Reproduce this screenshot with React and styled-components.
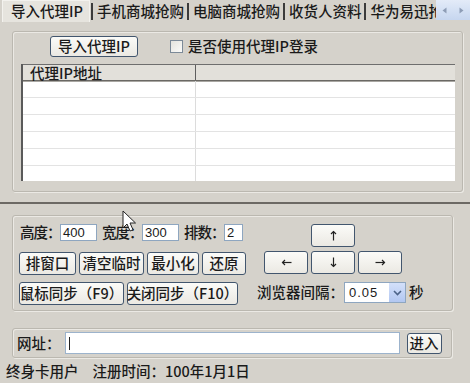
import React from "react";
import styled, { createGlobalStyle, css } from "styled-components";

const GlobalStyle = createGlobalStyle`
  html, body {
    margin: 0;
    padding: 0;
    background: #d5d2cb;
  }
  body {
    font-family: "Noto Sans CJK SC", "DejaVu Sans", sans-serif;
  }
`;

const Window = styled.div`
  position: relative;
  width: 470px;
  height: 383px;
  overflow: hidden;
  background: #d5d2cb;
  color: #1a1a1a;
  font-size: 14.5px;
  font-weight: 500;
  line-height: 1;
`;

/* ---------- tabs ---------- */

const TabBar = styled.div`
  display: flex;
  height: 22px;
`;

const TabList = styled.div`
  flex: 1;
  display: flex;
  align-items: center;
  overflow: hidden;
  padding-left: 2px;
`;

const Tab = styled.div`
  flex-shrink: 0;
  display: flex;
  align-items: center;
  height: 100%;
  white-space: nowrap;
  ${(p) =>
    p.$active &&
    css`
      padding: 0 6px 0 8px;
      background: #e6e4de;
      border: 1px solid #f3f2ee;
      border-bottom: none;
      box-sizing: border-box;
    `}
`;

const TabSep = styled.span`
  flex-shrink: 0;
  width: 2px;
  height: 17px;
  margin: 0 ${(p) => p.$right || 4}px 0 ${(p) => p.$left || 3}px;
  background: #3b3b3b;
`;

const TabScroll = styled.div`
  width: 34px;
  height: 20px;
  display: flex;
  align-items: center;
  justify-content: space-around;
  background: linear-gradient(#e3ebf8, #c6d6ef);
`;

const TabPanel = styled.div`
  box-sizing: border-box;
  height: 182px;
  padding: 9px 7px 0 12px;
  border-bottom: 2px solid #6c6964;
`;

/* ---------- common ---------- */

const GroupBox = styled.div`
  border: 1px solid #bbb8b0;
  border-radius: 3px;
  box-shadow: inset 1px 1px 0 #ebe9e4, 1px 1px 0 #ebe9e4;
`;

const Button = styled.div`
  box-sizing: border-box;
  display: flex;
  align-items: center;
  justify-content: center;
  flex-shrink: 0;
  width: ${(p) => p.$w}px;
  height: ${(p) => p.$h || 23}px;
  background: linear-gradient(#fbfbf8, #ebe9e3);
  border: 1px solid #42566e;
  border-radius: 3px;
  white-space: nowrap;
`;

const TextField = styled.div`
  box-sizing: border-box;
  display: flex;
  align-items: center;
  flex-shrink: 0;
  width: ${(p) => p.$w}px;
  height: ${(p) => p.$h || 17}px;
  padding-left: 2px;
  background: #fff;
  border: 1px solid #8ea6c0;
  font-family: "Liberation Sans", sans-serif;
  font-weight: 400;
  font-size: 13px;
`;

const Label = styled.span`
  white-space: nowrap;
`;

/* ---------- proxy group ---------- */

const ProxyGroup = styled(GroupBox)`
  padding-top: 4px;
`;

const Toolbar = styled.div`
  display: flex;
  align-items: center;
  padding-left: 37px;
`;

const CheckBox = styled.div`
  box-sizing: border-box;
  width: 13px;
  height: 13px;
  margin: 0 5px 0 32px;
  background: linear-gradient(135deg, #e4e3dd, #fbfbf9);
  border: 1px solid #7c8a98;
`;

const ListView = styled.div`
  height: 117px;
  margin: 7px 7px 10px 8px;
  background: #fff;
  border-left: 2px solid #5a5a5a;
  overflow: hidden;
`;

const ListHeader = styled.div`
  display: grid;
  grid-template-columns: 172px 1fr;
  height: 15px;
  background: #e2e0da;
  border-top: 1px solid #6e6e6e;
  border-bottom: 1px solid #6a6864;
  box-shadow: 0 1px 0 #a9a7a2;
`;

const HeaderCell = styled.div`
  padding-left: 7px;
  line-height: 15px;
  white-space: nowrap;
  & + & {
    border-left: 1px solid #5e5e5e;
  }
`;

const ListRow = styled.div`
  display: grid;
  grid-template-columns: 172px 1fr;
  height: 16px;
  border-bottom: 1px solid #e3e3e3;
`;

const Cell = styled.div`
  & + & {
    border-left: 1px solid #dcdcdc;
  }
`;

/* ---------- window controls ---------- */

const ControlGroup = styled(GroupBox)`
  display: flex;
  margin: 11px 17px 0 12px;
  padding: 8px 6px 5px;
`;

const Column = styled.div`
  display: flex;
  flex-direction: column;
`;

const Row = styled.div`
  display: flex;
  align-items: center;
  gap: ${(p) => p.$gap || 0}px;
  margin-top: ${(p) => p.$mt || 0}px;
`;

const SizeLabel = styled(Label)`
  width: 40px;
  margin-left: ${(p) => p.$ml || 0}px;
  letter-spacing: -1px;
`;

const RightColumn = styled.div`
  display: flex;
  flex-direction: column;
  margin-left: 11px;
`;

const ArrowPad = styled.div`
  display: grid;
  grid-template-columns: repeat(3, 44px);
  column-gap: 3px;
  row-gap: 4px;
  margin-left: 7px;
`;

const ArrowCell = styled(Button)`
  grid-column: ${(p) => p.$col};
`;

const Select = styled.div`
  box-sizing: border-box;
  display: flex;
  width: 62px;
  height: 21px;
  margin-right: 3px;
  background: #fff;
  border: 1px solid #8ea6c0;
`;

const SelectValue = styled.div`
  flex: 1;
  display: flex;
  align-items: center;
  padding-left: 4px;
  font-family: "Liberation Sans", sans-serif;
  font-weight: 400;
  font-size: 13px;
  letter-spacing: 1px;
`;

const SelectButton = styled.div`
  width: 16px;
  display: flex;
  align-items: center;
  justify-content: center;
  background: linear-gradient(#d3e0fa, #b2c7f1);
`;

/* ---------- url bar ---------- */

const UrlGroup = styled(GroupBox)`
  display: flex;
  align-items: center;
  height: 28px;
  margin: 17px 18px 0 12px;
  padding-left: 4px;
`;

const UrlField = styled(TextField)`
  margin: 0 7px 0 4px;
  border-color: #9cb3cc;
`;

const Caret = styled.span`
  width: 1px;
  height: 13px;
  margin-left: 1px;
  background: #222;
`;

const StatusBar = styled.div`
  display: flex;
  gap: 14px;
  margin-top: 6px;
  padding-left: 6px;
`;

const Pointer = styled.svg`
  position: absolute;
  left: 122px;
  top: 210px;
`;

const Arrow = ({ dir }) => {
  const rot = { up: 0, right: 90, down: 180, left: 270 }[dir];
  return (
    <svg width="11" height="11" viewBox="0 0 11 11">
      <g transform={`rotate(${rot} 5.5 5.5)`} fill="none" stroke="#222" strokeWidth="1.2">
        <path d="M5.5 1.5v9" />
        <path d="M3 4l2.5-2.5L8 4" />
      </g>
    </svg>
  );
};

const ScrollArrow = ({ flip }) => (
  <svg width="5" height="7" viewBox="0 0 5 7">
    <path d={flip ? "M0.5 0.5L4.5 3.5L0.5 6.5z" : "M4.5 0.5L0.5 3.5L4.5 6.5z"} fill="#8e9db6" />
  </svg>
);

const tabs = ["手机商城抢购", "电脑商城抢购", "收货人资料", "华为易迅抢购"];

export default function App() {
  return (
    <Window>
      <GlobalStyle />
      <TabBar>
        <TabList>
          <Tab $active>导入代理IP</Tab>
          {tabs.map((t, i) => (
            <React.Fragment key={t}>
              <TabSep $left={i === 0 ? 1 : 3} />
              <Tab>{t}</Tab>
            </React.Fragment>
          ))}
        </TabList>
        <TabScroll>
          <ScrollArrow />
          <ScrollArrow flip />
        </TabScroll>
      </TabBar>

      <TabPanel>
        <ProxyGroup>
          <Toolbar>
            <Button $w={88} $h={21}>导入代理IP</Button>
            <CheckBox />
            <Label>是否使用代理IP登录</Label>
          </Toolbar>
          <ListView>
            <ListHeader>
              <HeaderCell>代理IP地址</HeaderCell>
              <HeaderCell />
            </ListHeader>
            {[0, 1, 2, 3, 4, 5].map((i) => (
              <ListRow key={i}>
                <Cell />
                <Cell />
              </ListRow>
            ))}
          </ListView>
        </ProxyGroup>
      </TabPanel>

      <ControlGroup>
        <Column>
          <Row>
            <SizeLabel $ml={1}>高度：</SizeLabel>
            <TextField $w={37}>400</TextField>
            <SizeLabel $ml={5}>宽度：</SizeLabel>
            <TextField $w={37}>300</TextField>
            <SizeLabel $ml={5}>排数：</SizeLabel>
            <TextField $w={19}>2</TextField>
          </Row>
          <Row $gap={3} $mt={11}>
            <Button $w={57}>排窗口</Button>
            <Button $w={65}>清空临时</Button>
            <Button $w={52}>最小化</Button>
            <Button $w={44}>还原</Button>
          </Row>
          <Row $gap={3} $mt={7}>
            <Button $w={105}>鼠标同步（F9）</Button>
            <Button $w={111}>关闭同步（F10）</Button>
          </Row>
        </Column>
        <RightColumn>
          <ArrowPad>
            <ArrowCell $w={44} $col={2}><Arrow dir="up" /></ArrowCell>
            <ArrowCell $w={44} $col={1}><Arrow dir="left" /></ArrowCell>
            <ArrowCell $w={44} $col={2}><Arrow dir="down" /></ArrowCell>
            <ArrowCell $w={44} $col={3}><Arrow dir="right" /></ArrowCell>
          </ArrowPad>
          <Row $mt={8}>
            <Label>浏览器间隔：</Label>
            <Select>
              <SelectValue>0.05</SelectValue>
              <SelectButton>
                <svg width="9" height="6" viewBox="0 0 9 6">
                  <path d="M1 1l3.5 3.5L8 1" fill="none" stroke="#4c6388" strokeWidth="1.6" />
                </svg>
              </SelectButton>
            </Select>
            <Label>秒</Label>
          </Row>
        </RightColumn>
      </ControlGroup>

      <UrlGroup>
        <Label>网址：</Label>
        <UrlField $w={335} $h={22}>
          <Caret />
        </UrlField>
        <Button $w={35} $h={21}>进入</Button>
      </UrlGroup>

      <StatusBar>
        <Label>终身卡用户</Label>
        <Label>注册时间：100年1月1日</Label>
      </StatusBar>

      <Pointer width="14" height="22" viewBox="0 0 14 22">
        <path d="M1 1v17l4-4 3 7 3-1.3-3-6.7h5.5z" fill="#fff" stroke="#222" strokeWidth="1" strokeLinejoin="round" />
      </Pointer>
    </Window>
  );
}
